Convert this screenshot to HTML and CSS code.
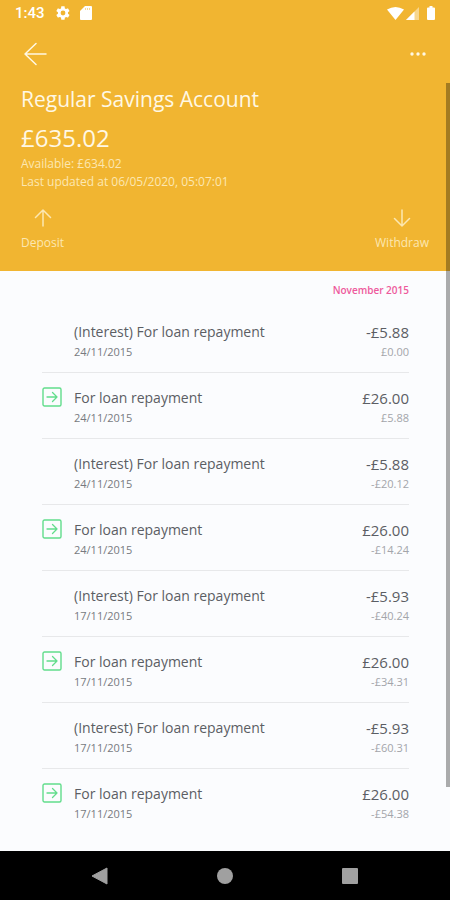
FILE: index.html
```html
<!DOCTYPE html>
<html lang="en">
<head>
<meta charset="utf-8">
<meta name="viewport" content="width=device-width, initial-scale=1">
<title>Regular Savings Account</title>
<link rel="stylesheet" href="styles.css">
</head>
<body>
<header class="account">
  <div class="status">
    <span class="clock">1:43</span>
    <svg class="gear" width="16" height="16" viewBox="0 0 24 24"><path fill="currentColor" d="M19.4 13c.1-.3.1-.6.1-1s0-.7-.1-1l2.100-1.600c.2-.2.300-.4.100-.7l-2-3.400c-.1-.2-.4-.3-.6-.2l-2.500 1c-.5-.4-1.100-.7-1.700-1L14.400 2.400c0-.2-.2-.4-.5-.4h-4c-.2 0-.4.2-.5.4L9 5.100c-.6.2-1.100.6-1.700 1l-2.500-1c-.2-.1-.5 0-.6.2l-2 3.400c-.1.200-.1.500.1.700L4.500 11c-.1.300-.1.700-.1 1s0 .7.100 1l-2.200 1.600c-.2.200-.2.400-.1.700l2 3.400c.1.200.4.300.6.200l2.500-1c.5.400 1.100.7 1.700 1l.4 2.700c0 .2.200.4.500.4h4c.2 0 .5-.2.500-.4l.4-2.700c.6-.2 1.100-.6 1.700-1l2.500 1c.2.100.5 0 .6-.2l2-3.400c.1-.2.100-.5-.1-.7zM12 15.600a3.600 3.600 0 1 1 0-7.200 3.600 3.600 0 0 1 0 7.200z"/></svg>
    <svg width="12" height="14" viewBox="0 0 12 14"><path fill="currentColor" d="M5 0h6q1 0 1 1v12q0 1-1 1H1q-1 0-1-1V5z"/><path stroke="#f1b531" stroke-opacity=".5" d="M5.500 2v2M7.500 2v2M9.500 2v2"/></svg>
    <span class="spacer"></span>
    <svg width="17" height="13" viewBox="0 0 17 13"><path fill="currentColor" d="M0 2.500Q8.500-2.500 17 2.500L8.500 13z"/></svg>
    <svg class="signal" width="13" height="13" viewBox="0 0 13 13"><path fill="currentColor" fill-opacity=".45" d="M13 0v13H0z"/><path fill="currentColor" d="M8.500 4.500V13H0z"/></svg>
    <svg width="8" height="14" viewBox="0 0 8 14"><path fill="currentColor" d="M2.500 0h3v1.500H7q1 0 1 1V13q0 1-1 1H1q-1 0-1-1V2.500q0-1 1-1h1.500z"/></svg>
  </div>
  <div class="toolbar">
    <button type="button" class="icon-button" aria-label="Back"><svg width="24" height="24" viewBox="0 0 24 24"><path class="line" d="M22 12H1M12 1.500 1 12l11 10.500"/></svg></button>
    <button type="button" class="icon-button" aria-label="More options"><svg width="16" height="4" viewBox="0 0 16 4"><g fill="currentColor"><circle cx="2" cy="2" r="1.700"/><circle cx="8" cy="2" r="1.700"/><circle cx="14" cy="2" r="1.700"/></g></svg></button>
  </div>
  <h1>Regular Savings Account</h1>
  <p class="balance">£635.02</p>
  <p class="detail">Available: £634.02</p>
  <p class="detail">Last updated at 06/05/2020, 05:07:01</p>
  <div class="actions">
    <button type="button" class="action"><svg width="18" height="18" viewBox="0 0 18 18"><path class="line" d="M9 17V1M1.500 8.500 9 1l7.500 7.500"/></svg><span>Deposit</span></button>
    <button type="button" class="action"><svg width="18" height="18" viewBox="0 0 18 18"><path class="line" d="M9 1v16M1.500 9.500 9 17l7.500-7.500"/></svg><span>Withdraw</span></button>
  </div>
</header>
<main>
  <h2>November 2015</h2>
  <ul class="transactions">
    <li><span class="mark"></span><div class="text"><span class="name">(Interest) For loan repayment</span><span class="date">24/11/2015</span></div><div class="sums"><span class="amount">-£5.88</span><span class="after">£0.00</span></div></li>
    <li><span class="mark"><svg width="20" height="20" viewBox="0 0 20 20"><use href="#incoming"/></svg></span><div class="text"><span class="name">For loan repayment</span><span class="date">24/11/2015</span></div><div class="sums"><span class="amount">£26.00</span><span class="after">£5.88</span></div></li>
    <li><span class="mark"></span><div class="text"><span class="name">(Interest) For loan repayment</span><span class="date">24/11/2015</span></div><div class="sums"><span class="amount">-£5.88</span><span class="after">-£20.12</span></div></li>
    <li><span class="mark"><svg width="20" height="20" viewBox="0 0 20 20"><use href="#incoming"/></svg></span><div class="text"><span class="name">For loan repayment</span><span class="date">24/11/2015</span></div><div class="sums"><span class="amount">£26.00</span><span class="after">-£14.24</span></div></li>
    <li><span class="mark"></span><div class="text"><span class="name">(Interest) For loan repayment</span><span class="date">17/11/2015</span></div><div class="sums"><span class="amount">-£5.93</span><span class="after">-£40.24</span></div></li>
    <li><span class="mark"><svg width="20" height="20" viewBox="0 0 20 20"><use href="#incoming"/></svg></span><div class="text"><span class="name">For loan repayment</span><span class="date">17/11/2015</span></div><div class="sums"><span class="amount">£26.00</span><span class="after">-£34.31</span></div></li>
    <li><span class="mark"></span><div class="text"><span class="name">(Interest) For loan repayment</span><span class="date">17/11/2015</span></div><div class="sums"><span class="amount">-£5.93</span><span class="after">-£60.31</span></div></li>
    <li><span class="mark"><svg width="20" height="20" viewBox="0 0 20 20"><use href="#incoming"/></svg></span><div class="text"><span class="name">For loan repayment</span><span class="date">17/11/2015</span></div><div class="sums"><span class="amount">£26.00</span><span class="after">-£54.38</span></div></li>
  </ul>
</main>
<nav class="system">
  <button type="button" aria-label="System back"><svg width="18" height="18" viewBox="0 0 18 18"><path fill="currentColor" d="M16 1v16L1 9z" stroke="currentColor" stroke-linejoin="round"/></svg></button>
  <button type="button" aria-label="Home"><svg width="18" height="18" viewBox="0 0 18 18"><circle cx="9" cy="9" r="8" fill="currentColor"/></svg></button>
  <button type="button" aria-label="Recent apps"><svg width="18" height="18" viewBox="0 0 18 18"><rect x="1" y="1" width="16" height="16" rx="1" fill="currentColor"/></svg></button>
</nav>
<div class="scrollbar"></div>
<svg width="0" height="0" class="symbols"><symbol id="incoming" viewBox="0 0 20 20"><rect x="1" y="1" width="18" height="18" rx="1.500" fill="none" stroke="#62dd8c" stroke-width="1.400"/><path d="M5 10h10M10.500 5.500 15 10l-4.500 4.500" fill="none" stroke="#62dd8c" stroke-width="1.300" stroke-linecap="round" stroke-linejoin="round"/></symbol></svg>
</body>
</html>
```
FILE: styles.css
```css
* { box-sizing: border-box; }
body {
  margin: 0;
  min-height: 100vh;
  position: relative;
  display: flex;
  flex-direction: column;
  background: #fbfcfe;
  color: #5b5e64;
  font-family: "Open Sans", "Noto Sans", sans-serif;
}
h1, h2, p, ul { margin: 0; padding: 0; font-weight: 400; }
svg { display: block; flex: none; }
button {
  border: 0;
  padding: 0;
  background: none;
  color: inherit;
  font: inherit;
}
.line {
  fill: none;
  stroke: currentColor;
  stroke-width: 1.5;
  stroke-linecap: round;
  stroke-linejoin: round;
}
.account {
  padding: 0 21px 19px;
  background: #f1b531;
  color: #fff8e4;
}
.status {
  display: flex;
  align-items: center;
  height: 26px;
  margin: 0 -6px;
  color: #fff;
}
.clock { font: 500 15px/20px Roboto, sans-serif; }
.gear { margin: 0 9px 0 10px; }
.spacer { flex: 1; }
.signal { margin: 0 8px 0 2px; }
.toolbar {
  display: flex;
  justify-content: space-between;
  align-items: center;
  height: 55px;
  padding: 0 3px;
}
h1 { font-size: 21px; line-height: 36px; }
.balance { padding-top: 4px; font-size: 24px; line-height: 34px; }
.detail {
  font-size: 12px;
  line-height: 18px;
  color: #fce7b1;
}
.actions {
  display: flex;
  justify-content: space-between;
  padding-top: 18px;
}
.action {
  display: flex;
  flex-direction: column;
  align-items: center;
  gap: 7px;
  font-size: 12px;
  line-height: 18px;
  color: #fce7b1;
}
main { flex: 1; padding: 0 41px 16px 42px; }
h2 {
  padding: 10px 0 8px;
  font-size: 10px;
  line-height: 18px;
  font-weight: 600;
  text-align: right;
  color: #ee5a9c;
}
.transactions { list-style: none; }
.transactions li {
  display: flex;
  padding: 14px 0 11px;
  border-bottom: 1px solid #e7e8ea;
}
.transactions li:last-child { border-bottom: 0; }
.mark { width: 32px; }
.text, .sums { display: flex; flex-direction: column; }
.text { flex: 1; }
.sums { text-align: right; }
.name { font-size: 14px; line-height: 22px; }
.amount { font-size: 15px; line-height: 22px; }
.date, .after { font-size: 11px; line-height: 18px; }
.date { color: #777a80; }
.after { color: #a3a5aa; }
.system {
  display: flex;
  justify-content: space-around;
  align-items: center;
  height: 49px;
  padding: 0 37px;
  background: #000;
  color: #a0a0a0;
}
.scrollbar {
  position: absolute;
  top: 83px;
  right: 0;
  bottom: 113px;
  width: 4px;
  background: rgba(0, 0, 0, 0.32);
}
.symbols { position: absolute; }
```
